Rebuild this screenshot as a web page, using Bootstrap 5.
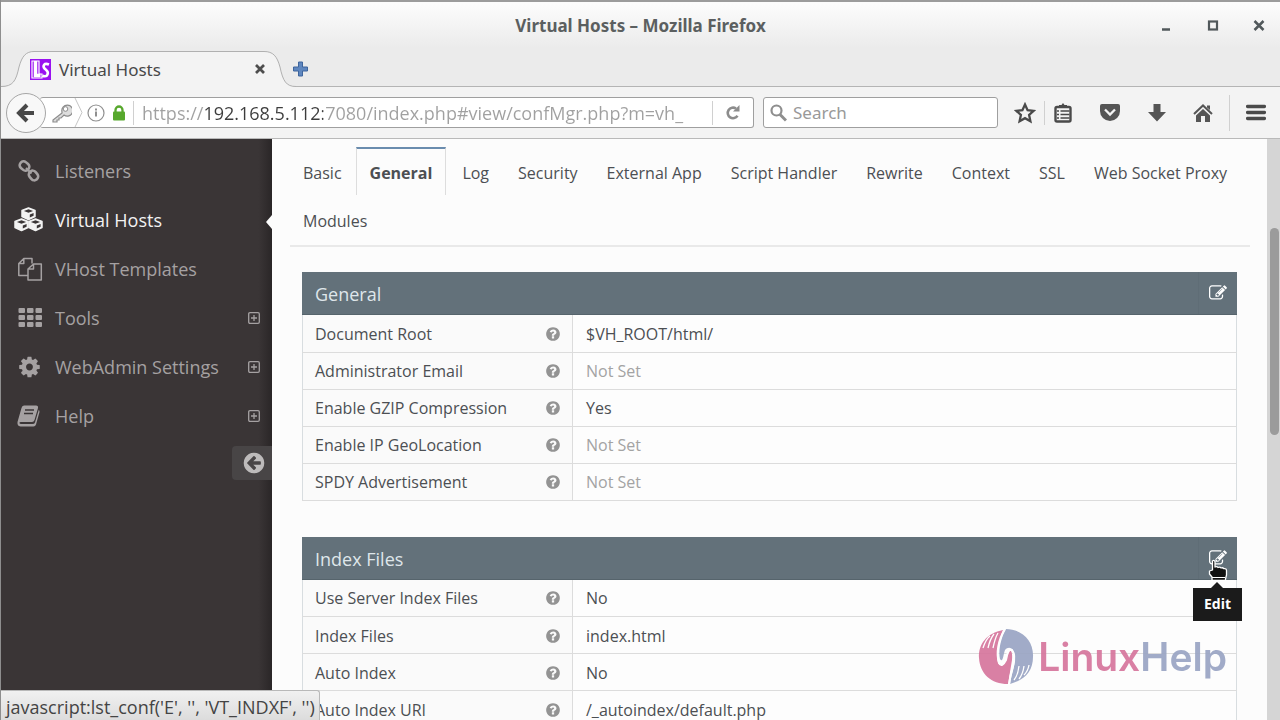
<!DOCTYPE html>
<html lang="en">
<head>
<meta charset="utf-8">
<meta name="viewport" content="width=device-width, initial-scale=1">
<title>Virtual Hosts</title>
<link rel="stylesheet" href="https://cdn.jsdelivr.net/npm/bootstrap@5.3.0/dist/css/bootstrap.min.css">
<style>
  body { font-family: "Open Sans", "Noto Sans", sans-serif; font-size: 16px; line-height: 24px; color: #4c4f53; background: #fcfcfc; }
  svg { display: block; flex: none; }
  button { font: inherit; color: inherit; }
  .bare { background: none; border: 0; padding: 0; }

  /* Browser window */
  .win { border-left: 1px solid #8e8e8e; }
  .chrome-font { font-family: "Noto Sans", "Open Sans", sans-serif; }
  .top-strip { background: linear-gradient(#fcfcfc 2px, #ebebeb 46px); border-top: 2px solid #9c9c9c; }
  .title-row { height: 49px; padding-bottom: 2px; color: #5b5f60; font-size: 17px; }
  .win-buttons { right: 12px; top: 15px; gap: 28px; }
  .tab-row { height: 36px; border-bottom: 1px solid #b4b4b4; }
  .page-tab { width: 292px; height: 36px; padding: 2px 26px 0 29px; font-size: 17px; color: #484848; }
  .tab-shape { left: 0; top: 0; }
  .toolbar-row { height: 52px; background: #f3f3f3; border-bottom: 1px solid #b9b9b9; padding: 0 14px 0 5px; }
  .back-btn { width: 40px; height: 40px; border-radius: 50%; border: 1px solid #a6a6a6; background: #f8f8f8; z-index: 2; }
  .field { height: 31px; background: #fff; border: 1px solid #9f9f9f; border-radius: 3px; }
  .url-field { margin-left: -6px; border-left: 0; padding-left: 12px; }
  .url-field input { width: 542px; border: 0; outline: 0; padding: 0; font-family: "Open Sans", sans-serif; font-size: 18px; background: linear-gradient(90deg, #a0a0a0 61px, #3c3c3c 61px, #3c3c3c 181px, #a0a0a0 181px); -webkit-background-clip: text; background-clip: text; color: #a0a0a0; -webkit-text-fill-color: transparent; }
  .search-field { width: 235px; margin-left: 9px; padding: 0 6px; gap: 6px; }
  .search-field input { border: 0; outline: 0; padding: 0; font-size: 17px; }
  .search-field input::placeholder { color: #999; opacity: 1; }
  .vline { width: 1px; height: 24px; background: #d0d0d0; }
  .vline.tall { height: 36px; }
  .icon-gap { margin-left: 27px; }

  /* Side menu */
  .side { width: 271px; background: linear-gradient(90deg, #3a3536 95%, #2a2627); padding-top: 7px; }
  .side a { height: 49px; padding: 0 12px 0 13px; font-size: 18px; color: #a5a1a2; text-decoration: none; }
  .side a.current { color: #f2f2f2; }
  .side .glyph { width: 29px; margin-right: 12px; }
  .notch { right: 0; top: 20px; border: solid transparent; border-width: 7px 6px 7px 0; border-right-color: #fcfcfc; }
  .minify { width: 40px; height: 34px; margin-top: 6px; background: #484546; border-radius: 4px 0 0 4px; padding-left: 4px; color: #bdbbbb; }

  /* Settings page */
  .settings { padding: 8px 17px 0 18px; }
  .conf-tabs { border-bottom: 2px solid #e9e9e9; padding-bottom: 2px; }
  .conf-tabs .nav-link { height: 48px; padding: 12px 12px 0; border: solid transparent; border-width: 2px 1px 0; margin-right: 3px; color: #4c4f53; border-radius: 0; }
  .conf-tabs .nav-link.active { font-weight: 700; padding: 12px 13px 0; margin-left: -2px; border-color: #6a8cae #ddd transparent; }
  .panels { padding: 25px 13px 0 12px; gap: 36px; }
  .panel-head { height: 43px; background: #63717a; color: #dfe6ea; font-size: 18px; padding-left: 13px; border-bottom: 1px solid #56646c; }
  .panel-head > span { padding-top: 2px; }
  .edit-btn { width: 39px; height: 42px; border-left: 1px solid #5f6d76; color: #fff; }
  .conf-table { width: 100%; border: solid #d8dde0; border-width: 0 1px; border-collapse: collapse; table-layout: fixed; }
  .conf-table tr { height: 37px; border-bottom: 1px solid #dcdcdc; }
  .conf-table th { width: 270px; font-weight: 400; background: #fafafa; border-right: 1px solid #dcdcdc; padding: 1px 11px 0 12px; }
  .conf-table td { background: #fdfdfd; padding: 1px 13px 0; }
  .unset { color: #a3a3a3; }
  .help { color: #939393; }
  .tip { right: -5px; top: 51px; width: 49px; height: 33px; background: #1b1b1b; color: #fff; font-size: 14px; font-weight: 700; z-index: 5; }
  .tip::before { content: ""; position: absolute; top: -6px; left: 18px; border: solid transparent; border-width: 0 6px 6px; border-bottom-color: #1b1b1b; }
  .pointer { left: 9px; top: 22px; z-index: 6; }

  .scroll-track { width: 13px; background: #d5d5d5; }
  .scroll-thumb { left: 3px; right: 1px; top: 15.3%; height: 35.7%; border-radius: 5px; background: #9b9b9b; }
  .status { left: 0; bottom: 0; height: 30px; padding: 3px 4px 0 5px; font-size: 18px; color: #444; background: linear-gradient(#f1f1f1, #dcdcdc); border: solid #b9b9b9; border-width: 1px 1px 0 0; border-radius: 0 3px 0 0; z-index: 7; }
  .brand { right: 53px; bottom: 34px; gap: 4px; font-family: Inter, sans-serif; font-size: 39px; font-weight: 600; color: #9aa5c4; opacity: .92; z-index: 4; pointer-events: none; }
  .brand b { font-weight: 600; color: #d6769d; }
</style>
</head>
<body class="overflow-hidden">
<svg class="d-none" aria-hidden="true">
  <symbol id="i-edit" viewBox="0 0 1792 1792"><path fill="currentColor" d="M888 1184l116-116-152-152-116 116v56h96v96h56zm440-720q-16-16-33 1l-350 350q-17 17-1 33t33-1l350-350q17-17 1-33zm80 594v190q0 119-84.5 203.5t-203.5 84.5h-832q-119 0-203.5-84.5t-84.5-203.5v-832q0-119 84.5-203.5t203.5-84.5h832q63 0 117 25 15 7 18 23 3 17-9 29l-49 49q-14 14-32 8-23-6-45-6h-832q-66 0-113 47t-47 113v832q0 66 47 113t113 47h832q66 0 113-47t47-113v-126q0-13 9-22l64-64q15-15 35-7t20 29zm-96-738l288 288-672 672h-288v-288zm444 132l-92 92-288-288 92-92q28-28 68-28t68 28l152 152q28 28 28 68t-28 68z"/></symbol>
  <symbol id="i-help" viewBox="0 0 1792 1792"><path fill="currentColor" d="M1024 1376v-192q0-14-9-23t-23-9h-192q-14 0-23 9t-9 23v192q0 14 9 23t23 9h192q14 0 23-9t9-23zm256-672q0-88-55.5-163t-138.5-116-170-41q-243 0-371 213-15 24 8 42l132 100q7 6 19 6 16 0 25-12 53-68 86-92 34-24 86-24 48 0 85.5 26t37.5 59q0 38-20 61t-68 45q-63 28-115.5 86.5t-52.5 125.5v36q0 14 9 23t23 9h192q14 0 23-9t9-23q0-19 21.5-49.5t54.5-49.5q32-18 49-28.5t46-35 44.5-48 28-60.5 12.5-81zm384 192q0 209-103 385.5t-279.5 279.5-385.5 103-385.5-103-279.5-279.5-103-385.5 103-385.5 279.5-279.5 385.5-103 385.5 103 279.5 279.5 103 385.5z"/></symbol>
  <symbol id="i-plus" viewBox="0 0 12 12"><path fill="none" stroke="currentColor" stroke-width="1.3" d="M2 .7h8q1.300 0 1.300 1.300v8q0 1.300-1.300 1.300h-8q-1.300 0-1.300-1.300v-8q0-1.300 1.300-1.300zM6 3v6M3 6h6"/></symbol>
</svg>
<div class="win d-flex flex-column vh-100">
  <header class="chrome-font">
    <div class="top-strip">
      <div class="title-row position-relative d-flex align-items-center justify-content-center fw-bold">
        <span>Virtual Hosts – Mozilla Firefox</span>
        <div class="win-buttons position-absolute d-flex">
          <button class="bare" aria-label="Minimize"><svg width="18" height="18" viewBox="0 0 18 18"><path d="M4 12.500h8" stroke="#51585b" stroke-width="2.500"/></svg></button>
          <button class="bare" aria-label="Maximize"><svg width="18" height="18" viewBox="0 0 18 18"><rect x="5" y="4.500" width="8" height="8" fill="none" stroke="#51585b" stroke-width="2.200"/></svg></button>
          <button class="bare" aria-label="Close"><svg width="18" height="18" viewBox="0 0 18 18"><path d="M4.500 4l9 9M13.500 4l-9 9" stroke="#51585b" stroke-width="2.500"/></svg></button>
        </div>
      </div>
      <div class="tab-row d-flex align-items-center">
        <div class="page-tab position-relative d-flex align-items-center">
          <svg class="tab-shape position-absolute" width="296" height="36" viewBox="0 0 296 36"><path d="M0 35.500C12 35.500 15 30 18 16C21 5 25 .5 33 .5H263C272 .5 276 5 279 16C282 30 285 35.500 295 35.500V37H0z" fill="#f3f3f3"/><path d="M0 35.500C12 35.500 15 30 18 16C21 5 25 .5 33 .5H263C272 .5 276 5 279 16C282 30 285 35.500 295 35.500" fill="none" stroke="#b0b0b0"/></svg>
          <svg class="position-relative" width="21" height="21" viewBox="0 0 21 21"><rect width="21" height="21" fill="#9a12f0"/><path d="M2 2h7v13h3v4H2z" fill="none" stroke="#fff" stroke-width="1.200"/><path d="M5.500 2v14.500h5" fill="none" stroke="#fff" stroke-width="3.500"/><path d="M19 5.500C14 3.500 12.500 7 14.500 9.500C16.500 11.500 19 12 17.500 15.500C16.500 18 13.500 17.500 12.500 16.500" fill="none" stroke="#fff" stroke-width="2.600"/></svg>
          <span class="position-relative ms-2 flex-grow-1">Virtual Hosts</span>
          <button class="bare position-relative" aria-label="Close tab"><svg width="14" height="14" viewBox="0 0 14 14"><path d="M3 2l8 8M11 2l-8 8" stroke="#4d4d4d" stroke-width="2.700"/></svg></button>
        </div>
        <button class="bare position-relative" aria-label="New tab"><svg width="15" height="16" viewBox="0 0 15 16"><path d="M5.500 1h4v5h5v4h-5v5h-4v-5h-5v-4h5z" fill="#5f87bf" stroke="#3e659d"/></svg></button>
      </div>
    </div>
    <div class="toolbar-row d-flex align-items-center">
      <button class="back-btn bare d-flex align-items-center justify-content-center" aria-label="Back"><svg width="20" height="20" viewBox="0 0 20 20"><path d="M11 2L3 10l8 8M3.500 10H18" fill="none" stroke="#484848" stroke-width="4"/></svg></button>
      <div class="field url-field d-flex align-items-center flex-grow-1">
        <svg width="20" height="20" viewBox="0 0 20 20"><path d="M10 10L1 17v2h4v-2h2v-2h2l3-3a5.500 5.500 0 1 0-2-3z" fill="#ddd" stroke="#8c8c8c" stroke-width="1.200"/><circle cx="13.500" cy="6" r="2.300" fill="#fff" stroke="#8c8c8c"/></svg>
        <svg width="15" height="29" viewBox="0 0 15 29"><path d="M3 0l7 14.500-7 14.500" fill="none" stroke="#c6c6c6"/></svg>
        <svg width="18" height="18" viewBox="0 0 18 18"><circle cx="9" cy="9" r="8" fill="none" stroke="#8f8f8f" stroke-width="1.200"/><path d="M9 7.500v5M9 4.500v2" stroke="#8f8f8f" stroke-width="2"/></svg>
        <svg class="ms-2" width="12" height="16" viewBox="0 0 12 16"><rect y="6.500" width="12" height="9" rx="1" fill="#57a82d"/><path d="M2.500 8V5a3.500 3.500 0 0 1 7 0v3" fill="none" stroke="#57a82d" stroke-width="2.300"/></svg>
        <span class="vline mx-2"></span>
        <input type="text" aria-label="Address" value="https://192.168.5.112:7080/index.php#view/confMgr.php?m=vh_E">
        <span class="vline ms-auto"></span>
        <button class="bare px-2 mx-1" aria-label="Reload"><svg width="16" height="17" viewBox="0 0 16 17"><path d="M12.500 11.800A5.300 5.300 0 1 1 11 4.500" fill="none" stroke="#8c8c8c" stroke-width="2.600"/><path d="M8 7.500h6.500V1z" fill="#8c8c8c"/></svg></button>
      </div>
      <div class="field search-field d-flex align-items-center">
        <svg width="17" height="18" viewBox="0 0 17 18"><circle cx="6.500" cy="6.500" r="5" fill="none" stroke="#8e8e8e" stroke-width="2.200"/><path d="M10 10.500l6 6" stroke="#8e8e8e" stroke-width="3"/></svg>
        <input type="text" class="w-100" placeholder="Search" aria-label="Search">
      </div>
      <div class="d-flex align-items-center">
        <button class="bare ms-3" aria-label="Bookmark this page"><svg width="22" height="22" viewBox="0 0 22 22"><path d="M11 2.500l2.600 5.700 6 .7-4.500 4.100 1.300 6.300-5.400-3.100-5.400 3.100 1.300-6.300L2.400 8.900l6-.7z" fill="none" stroke="#4a4a4a" stroke-width="2.300"/></svg></button>
        <span class="vline mx-2"></span>
        <button class="bare" aria-label="Bookmarks"><svg width="20" height="20" viewBox="0 0 20 20"><path d="M6 4V2h2.500l1.500-2 1.500 2H14v2z" fill="#4a4a4a"/><rect x="2.500" y="4" width="15" height="14.500" rx="1.500" fill="none" stroke="#4a4a4a" stroke-width="2.400"/><path d="M4 8h2M4 11.500h2M4 15h2M7.500 8h9M7.500 11.500h9M7.500 15h9" stroke="#4a4a4a" stroke-width="1.700"/></svg></button>
        <button class="bare icon-gap" aria-label="Pocket"><svg width="20" height="19" viewBox="0 0 20 19"><path d="M2 1h16q2 0 2 2v5a10 10 0 0 1-20 0V3q0-2 2-2z" fill="#555"/><path d="M5 6.500l5 5 5-5" fill="none" stroke="#f3f3f3" stroke-width="2.300"/></svg></button>
        <button class="bare icon-gap" aria-label="Downloads"><svg width="19" height="20" viewBox="-1 0 19 20"><path d="M5.500 1h7v8H18l-9 9.500L0 9h5.500z" fill="#555"/></svg></button>
        <button class="bare icon-gap" aria-label="Home"><svg width="20" height="20" viewBox="0 0 20 20"><path d="M1 11L10 2.500 19 11" fill="none" stroke="#555" stroke-width="2"/><path d="M14 2.500h3V7l-3-2.500zM10 6l7 6.500V19h-5v-6H8v6H3v-6.500z" fill="#555"/></svg></button>
        <span class="vline mx-3 tall"></span>
        <button class="bare" aria-label="Open menu"><svg width="20" height="18" viewBox="0 0 20 18"><path d="M1.500 2.500h17M1.500 8.500h17M1.500 14.500h17" stroke="#4a4a4a" stroke-width="3.300" stroke-linecap="round"/></svg></button>
      </div>
    </div>
  </header>

  <div class="position-relative d-flex flex-grow-1 overflow-hidden">
    <nav class="side flex-shrink-0 d-flex flex-column" aria-label="Main">
      <a href="#" class="d-flex align-items-center"><span class="glyph"><svg width="29" height="24" viewBox="0 0 29 24" fill="none" stroke="currentColor" stroke-width="2.600"><rect x="-5" y="-3.800" width="10" height="7.600" rx="3.500" transform="translate(10.500 7) rotate(40)"/><rect x="-5" y="-3.800" width="10" height="7.600" rx="3.500" transform="translate(19.500 16.500) rotate(50)"/><path d="M12 9l5.500 5.500" stroke-width="2"/></svg></span><span class="flex-grow-1">Listeners</span></a>
      <a href="#" class="current position-relative d-flex align-items-center"><span class="glyph"><svg width="29" height="25" viewBox="0 0 29 25"><g fill="currentColor" stroke="currentColor" stroke-width="1.500" stroke-linejoin="round"><path id="cube" d="M14.500 1l6.500 2.500v6l-6.500 3-6.500-3v-6z"/><use href="#cube" x="-7" y="11"/><use href="#cube" x="7" y="11"/></g><g fill="#3a3536"><path id="lid" d="M14.500 2.200l4.600 1.700-4.600 1.800-4.600-1.800zM15.800 7.500l3.800-1.600v2.800l-3.800 1.800z"/><use href="#lid" x="-7" y="11"/><use href="#lid" x="7" y="11"/></g></svg></span><span class="flex-grow-1">Virtual Hosts</span><i class="notch position-absolute"></i></a>
      <a href="#" class="d-flex align-items-center"><span class="glyph"><svg width="29" height="24" viewBox="0 0 29 24" fill="none" stroke="currentColor" stroke-width="1.500" stroke-linejoin="round"><path d="M14 18.500H4.800V6.500l5-5H18v5M9.800 1.500v5h-5M14 12l5.500-5H27.300v16H14zM19.500 7v5H14"/></svg></span><span class="flex-grow-1">VHost Templates</span></a>
      <a href="#" class="d-flex align-items-center"><span class="glyph"><svg width="29" height="20" viewBox="0 0 29 20" fill="currentColor"><g id="r"><rect x="4.500" width="6.500" height="5" rx="1"/><rect x="13" width="6.500" height="5" rx="1"/><rect x="21.500" width="6.500" height="5" rx="1"/></g><use href="#r" y="7"/><use href="#r" y="14"/></svg></span><span class="flex-grow-1">Tools</span><svg width="12" height="12"><use href="#i-plus"/></svg></a>
      <a href="#" class="d-flex align-items-center"><span class="glyph"><svg width="29" height="24" viewBox="-260 0 2166 1792"><path fill="currentColor" d="M1152 896q0-106-75-181t-181-75-181 75-75 181 75 181 181 75 181-75 75-181zm512-109v222q0 12-8 23t-20 13l-185 28q-19 54-39 91 35 50 107 138 10 12 10 25t-9 23q-27 37-99 108t-94 71q-12 0-26-9l-138-108q-44 23-91 38-16 136-29 186-7 28-36 28h-222q-14 0-24.500-8.500t-11.500-21.500l-28-184q-49-16-90-37l-141 107q-10 9-25 9-14 0-25-11-126-114-165-168-7-10-7-23 0-12 8-23 15-21 51-66.500t54-70.500q-27-50-41-99l-183-27q-13-2-21-12.500t-8-23.500v-222q0-12 8-23t19-13l186-28q14-46 39-92-40-57-107-138-10-12-10-24 0-10 9-23 26-36 98.500-107.500t94.500-71.500q13 0 26 10l138 107q44-23 91-38 16-136 29-186 7-28 36-28h222q14 0 24.500 8.500t11.500 21.500l28 184q49 16 90 37l142-107q9-9 24-9 13 0 25 10 129 119 165 170 7 8 7 22 0 12-8 23-15 21-51 66.500t-54 70.500q26 50 41 98l183 28q13 2 21 12.500t8 23.500z"/></svg></span><span class="flex-grow-1">WebAdmin Settings</span><svg width="12" height="12"><use href="#i-plus"/></svg></a>
      <a href="#" class="d-flex align-items-center"><span class="glyph"><svg width="29" height="22" viewBox="0 0 29 22"><path fill="currentColor" d="M10 .5h12q2.500 0 2 2.500L20.500 15q-.7 2-2.500 2H7q-2 0-1.500 1.300.3.700 1.500.700h11.500q2 0 2.500-1.500L24.700 5q1 .7.800 2L22 19.500q-.7 2-2.500 2H6.500Q3 21 3.500 17L7.500 3Q8 .5 10 .5z"/><path d="M11 5h9M10 8.500h9" stroke="#3a3536" stroke-width="1.400"/></svg></span><span class="flex-grow-1">Help</span><svg width="12" height="12"><use href="#i-plus"/></svg></a>
      <button class="minify bare align-self-end d-flex align-items-center justify-content-center" aria-label="Collapse menu"><svg width="24" height="24" viewBox="0 0 1792 1792"><path fill="currentColor" d="M1408 960v-128q0-26-19-45t-45-19h-502l189-189q19-19 19-45t-19-45l-91-91q-18-18-45-18t-45 18l-362 362-91 91q-18 18-18 45t18 45l91 91 362 362q18 18 45 18t45-18l91-91q18-18 18-45t-18-45l-189-189h502q26 0 45-19t19-45zm256-64q0 209-103 385.500t-279.500 279.500-385.500 103-385.500-103-279.500-279.500-103-385.500 103-385.500 279.500-279.500 385.500-103 385.500 103 279.500 279.500 103 385.500z"/></svg></button>
    </nav>

    <main class="settings flex-grow-1">
      <ul class="nav conf-tabs">
        <li><a class="nav-link" href="#">Basic</a></li>
        <li><a class="nav-link active" href="#">General</a></li>
        <li><a class="nav-link" href="#">Log</a></li>
        <li><a class="nav-link" href="#">Security</a></li>
        <li><a class="nav-link" href="#">External App</a></li>
        <li><a class="nav-link" href="#">Script Handler</a></li>
        <li><a class="nav-link" href="#">Rewrite</a></li>
        <li><a class="nav-link" href="#">Context</a></li>
        <li><a class="nav-link" href="#">SSL</a></li>
        <li><a class="nav-link" href="#">Web Socket Proxy</a></li>
        <li><a class="nav-link" href="#">Modules</a></li>
      </ul>
      <div class="panels d-flex flex-column">
        <section>
          <div class="panel-head d-flex align-items-center justify-content-between"><span>General</span>
            <button class="edit-btn bare d-flex align-items-center justify-content-center" aria-label="Edit General"><svg width="18" height="18"><use href="#i-edit"/></svg></button></div>
          <table class="conf-table">
            <tr><th scope="row"><div class="d-flex align-items-center justify-content-between">Document Root<svg class="help" width="16" height="16"><use href="#i-help"/></svg></div></th><td>$VH_ROOT/html/</td></tr>
            <tr><th scope="row"><div class="d-flex align-items-center justify-content-between">Administrator Email<svg class="help" width="16" height="16"><use href="#i-help"/></svg></div></th><td class="unset">Not Set</td></tr>
            <tr><th scope="row"><div class="d-flex align-items-center justify-content-between">Enable GZIP Compression<svg class="help" width="16" height="16"><use href="#i-help"/></svg></div></th><td>Yes</td></tr>
            <tr><th scope="row"><div class="d-flex align-items-center justify-content-between">Enable IP GeoLocation<svg class="help" width="16" height="16"><use href="#i-help"/></svg></div></th><td class="unset">Not Set</td></tr>
            <tr><th scope="row"><div class="d-flex align-items-center justify-content-between">SPDY Advertisement<svg class="help" width="16" height="16"><use href="#i-help"/></svg></div></th><td class="unset">Not Set</td></tr>
          </table>
        </section>
        <section>
          <div class="panel-head d-flex align-items-center justify-content-between"><span>Index Files</span>
            <button class="edit-btn bare position-relative d-flex align-items-center justify-content-center" aria-label="Edit Index Files"><svg width="18" height="18"><use href="#i-edit"/></svg>
              <svg class="pointer position-absolute" width="20" height="22" viewBox="0 0 20 22"><path d="M4.500 2q2-1.500 2.500 1v5q2-1 3 .5 2-1 3 .5 2-.7 2.700.7 3-.7 2.800 2.300v4l-1 4v1.500H4V18l-2.500-3V12l3-1z" fill="#111" stroke="#fff" stroke-width="1.300" stroke-linejoin="round"/><path d="M4 18.500h13" stroke="#fff" stroke-width="1"/></svg>
              <span class="tip position-absolute d-flex align-items-center justify-content-center" role="tooltip">Edit</span></button></div>
          <table class="conf-table">
            <tr><th scope="row"><div class="d-flex align-items-center justify-content-between">Use Server Index Files<svg class="help" width="16" height="16"><use href="#i-help"/></svg></div></th><td>No</td></tr>
            <tr><th scope="row"><div class="d-flex align-items-center justify-content-between">Index Files<svg class="help" width="16" height="16"><use href="#i-help"/></svg></div></th><td>index.html</td></tr>
            <tr><th scope="row"><div class="d-flex align-items-center justify-content-between">Auto Index<svg class="help" width="16" height="16"><use href="#i-help"/></svg></div></th><td>No</td></tr>
            <tr><th scope="row"><div class="d-flex align-items-center justify-content-between">Auto Index URI<svg class="help" width="16" height="16"><use href="#i-help"/></svg></div></th><td>/_autoindex/default.php</td></tr>
          </table>
        </section>
      </div>
    </main>
    <div class="scroll-track position-relative flex-shrink-0"><div class="scroll-thumb position-absolute"></div></div>

    <div class="brand position-absolute d-flex align-items-center">
      <svg width="56" height="58" viewBox="0 0 56 58"><path d="M25 2C9 5 0 16 1 30C2 46 13 56 30 56L34 32C35 21 31 20 29 27C28 34 26 38 22 37C17 35 20 15 25 2z" fill="#d6769d"/><path d="M28 1C44 1 56 13 55 29C55 43 47 52 32 56C33 48 37 38 37 31C37 20 31 17 27 22C25 28 25 35 22 31C20 22 23 10 28 1z" fill="#9aa5c4"/><path d="M27 1C20 12 18 26 21 35Q24 40 28 32Q30 20 34 22Q38 27 35 38Q32 48 31 57" fill="none" stroke="#fff" stroke-width="2"/><path d="M5 20q3-9 7-12M10 20q2-9 6-14M15 20q2-10 5-15M36 52q4-5 5-14M41 51q4-5 5-13M46 47q4-4 5-10" fill="none" stroke="#fff" stroke-width="1.300"/></svg>
      <span><b>Linux</b>Help</span>
    </div>
    <div class="status position-absolute d-flex align-items-center">javascript:lst_conf('E', '', 'VT_INDXF', '')</div>
  </div>
</div>
<script src="https://cdn.jsdelivr.net/npm/bootstrap@5.3.0/dist/js/bootstrap.bundle.min.js"></script>
</body>
</html>
